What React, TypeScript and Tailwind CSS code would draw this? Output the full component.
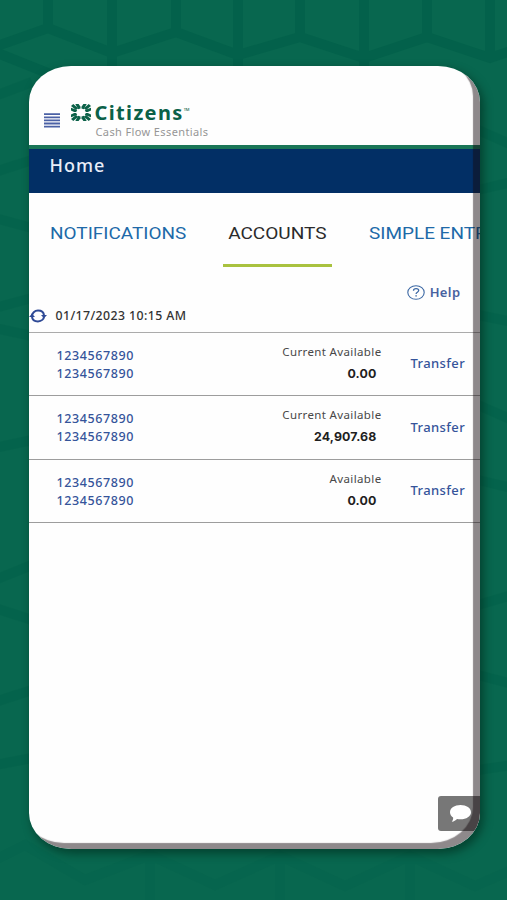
import { ReactNode } from "react";

const tabs = [
  { label: "NOTIFICATIONS", active: false },
  { label: "ACCOUNTS", active: true },
  { label: "SIMPLE ENTRY", active: false },
];

const accounts = [
  { name: "1234567890", number: "1234567890", label: "Current Available", amount: "0.00" },
  { name: "1234567890", number: "1234567890", label: "Current Available", amount: "24,907.68" },
  { name: "1234567890", number: "1234567890", label: "Available", amount: "0.00" },
];

function Backdrop() {
  return (
    <svg
      className="absolute inset-0 h-full w-full"
      viewBox="0 0 507 900"
      fill="none"
      stroke="#015f49"
      strokeWidth="10"
    >
      <g opacity="0.65">
        <path d="M-14 50 48 28 112 53 176 32 238 55 300 37 364 58 427 37 490 58 520 48" />
        <path d="M48 28V-5M112 55V-5M176 32V-5M238 57V-5M300 37V-5M364 60V-5M427 37V-5M490 60V-5" />
        <path d="M-5 52 60 78M112 55V80M238 57V80M364 60V80" />
      </g>
      <g opacity="0.4">
        <path d="M-5 96 32 82M-5 172 32 160M-5 218 32 228M-5 308 32 298M-5 328 32 336M-5 448 32 440M-5 580 32 565M-5 608 32 620M-5 702 32 690M-5 765 32 758" />
        <path d="M478 130 512 145M478 190 512 182M478 315 512 322M478 405 512 420M478 480 512 488M478 605 512 595M478 675 512 684M478 770 512 765" />
      </g>
      <g opacity="0.2">
        <path d="M-5 860 25 845 85 880 150 855 215 885 280 856 345 886 410 856 475 886 512 870M150 855V905M280 856V905M410 856V905" />
      </g>
    </svg>
  );
}

function MenuIcon() {
  return (
    <svg className="h-[15px] w-4" viewBox="0 0 16 15" fill="none" stroke="#4b61a5" strokeWidth="1.8">
      <path d="M0 1.200h16M0 4.300h16M0 7.400h16M0 10.500h16M0 13.600h16" />
    </svg>
  );
}

function LogoMark() {
  return (
    <svg className="h-[17px] w-[20px]" viewBox="0 0 20 20" preserveAspectRatio="none" fill="#0b6148">
      {[0, 90, 180, 270].map((angle) => (
        <g key={angle} transform={`rotate(${angle} 10 10)`}>
          <path d="M0 2.3 2.3 0 7.200 4.900 4.900 7.200Z" />
          <path d="M4.300 0H7.600L9.500 3.200V5.200L7.200 6.200Z" />
          <path d="M12.400 0H15.700L12.800 6.200 10.500 5.200V3.200Z" />
        </g>
      ))}
    </svg>
  );
}

function RefreshIcon() {
  return (
    <svg className="h-[14px] w-[18px]" viewBox="0 0 18 14" fill="none" stroke="#2f4a96" strokeWidth="2">
      <path d="M3 7C3 3.900 5.600 1.600 9 1.600s5.800 2 6 4.800" />
      <path d="M15 7c0 3.100-2.600 5.400-6 5.400S3.200 10.400 3 7.600" />
      <path d="M0 8 3 4.800 6 8ZM12 6 15 9.200 18 6Z" fill="#2f4a96" stroke="none" />
    </svg>
  );
}

function HelpIcon() {
  return (
    <svg className="h-[15px] w-[18px]" viewBox="0 0 18 15" fill="none" stroke="#3c68a4" strokeWidth="1.1">
      <ellipse cx="9" cy="7.5" rx="8.2" ry="6.8" />
      <path d="M6.500 5.800C6.500 4.500 7.500 3.700 9.100 3.700s2.600.8 2.600 1.900c0 1.600-2.600 1.600-2.600 3.300" strokeWidth="1.3" />
      <path d="M9.100 10.200v1.400" strokeWidth="1.500" />
    </svg>
  );
}

function Link({ children }: { children: ReactNode }) {
  return <span className="font-medium text-[#35549a]">{children}</span>;
}

export default function App() {
  return (
    <main className="relative h-[900px] w-[507px] overflow-hidden bg-[#08674f] pt-[65.5px] pl-[28.5px] font-['Noto_Sans',sans-serif]">
      <Backdrop />

      <div className="relative h-[783px] w-[451.5px] rounded-[42px/36px] shadow-[3px_4px_9px_1px_rgba(0,40,25,0.55)]">
        <div className="relative flex h-full flex-col overflow-hidden rounded-[42px/36px] bg-[#fefefe]">
          <header className="flex h-[79.5px] shrink-0 pt-[37px] pl-[15px]">
            <div className="pt-[10.5px]">
              <MenuIcon />
            </div>
            <div className="ml-[11px] pt-[1.5px]">
              <LogoMark />
            </div>
            <div className="ml-1 flex flex-col whitespace-nowrap">
              <div className="flex h-[20px] items-center text-[20px] leading-[20px] font-bold text-[#0b6148]">
                <span className="tracking-[1.35px]">Citizens</span>
                <span className="mb-1.5 text-[4px] leading-[5px] font-medium">TM</span>
              </div>
              <p className="mt-px ml-px text-[11px] leading-[16px] tracking-[0.38px] text-[#969696]">
                Cash Flow Essentials
              </p>
            </div>
          </header>

          <div className="h-[47.5px] shrink-0 border-t-4 border-[#1a7657] bg-[#022f65] pl-[21px]">
            <h1 className="pt-[3px] text-[18px] leading-[26px] font-medium tracking-[1px] text-[#e8edf8]">Home</h1>
          </div>

          <nav className="flex h-[74px] shrink-0 pl-[21px] font-['Roboto',sans-serif] text-[16px]">
            {tabs.map((tab) => (
              <div
                key={tab.label}
                className={
                  tab.active
                    ? "mx-[37px] flex h-[74px] w-[109px] shrink-0 justify-center border-b-3 border-[#a9c23f] pt-[29px] text-[#2b2b2b]"
                    : "w-[136px] shrink-0 pt-[29px] text-[#2069a8]"
                }
              >
                <span
                  className={
                    tab.active
                      ? "inline-block scale-x-[1.19] whitespace-nowrap"
                      : "inline-block origin-left scale-x-[1.185] whitespace-nowrap"
                  }
                >
                  {tab.label}
                </span>
              </div>
            ))}
          </nav>

          <div className="flex h-[52px] shrink-0 items-center justify-end gap-[5px] pr-[19.5px] text-[13px] font-semibold tracking-[0.4px] text-[#4862a0]">
            <HelpIcon />
            <span>Help</span>
          </div>

          <div className="-mt-[14px] flex h-[28px] shrink-0 items-start gap-[9px] border-b-[1.5px] border-[#ababab] pt-[2px] text-[12.3px] leading-[18px] font-medium tracking-[0.42px] text-[#333333]">
            <div className="pt-[2.5px]">
              <RefreshIcon />
            </div>
            <span>01/17/2023 10:15 AM</span>
          </div>

          {accounts.map((account, i) => (
            <div key={i} className="flex h-[63.5px] shrink-0 border-b-[1.5px] border-[#9d9d9d] text-[13px]">
              <div className="flex w-[130px] flex-col pt-[14px] pl-[28px] text-[12.5px] leading-[18.3px] tracking-[0.6px]">
                <Link>{account.name}</Link>
                <Link>{account.number}</Link>
              </div>
              <div className="flex-1 pt-[10px] text-right">
                <p className="text-[11.5px] leading-[18px] tracking-[0.37px] text-[#484848]">{account.label}</p>
                <p className="mt-[4px] pr-[5px] font-['Inter',sans-serif] text-[12.4px] leading-[18px] font-bold tracking-[0.15px] text-[#1f1f1f]">
                  {account.amount}
                </p>
              </div>
              <div className="w-[98.5px] pt-[21.5px] pl-[29px] leading-[18px] tracking-[0.4px]">
                <Link>Transfer</Link>
              </div>
            </div>
          ))}

          <div className="absolute right-0 bottom-[17.5px] flex h-[35px] w-[42.5px] items-center rounded-l-[3px] bg-[#777777] pl-[11px]">
            <svg className="h-[17px] w-[22px]" viewBox="0 0 22 17" fill="white">
              <path d="M11.500 0C17.300 0 22 3.100 22 7.200s-4.700 7.100-10.500 7.100c-1.200 0-2.400-.1-3.500-.4-1.400 1.400-3 2.400-5.200 2.900 1-1.200 1.500-2.700 1.300-4.300C2.200 11.100 1 9.300 1 7.200 1 3.100 5.700 0 11.500 0Z" />
            </svg>
          </div>

          {/* bevel along the right and bottom edge of the screen */}
          <div className="pointer-events-none absolute inset-0 rounded-[42px/36px] shadow-[inset_-7px_-6px_1px_rgba(20,10,15,0.48)]" />
        </div>
      </div>
    </main>
  );
}
